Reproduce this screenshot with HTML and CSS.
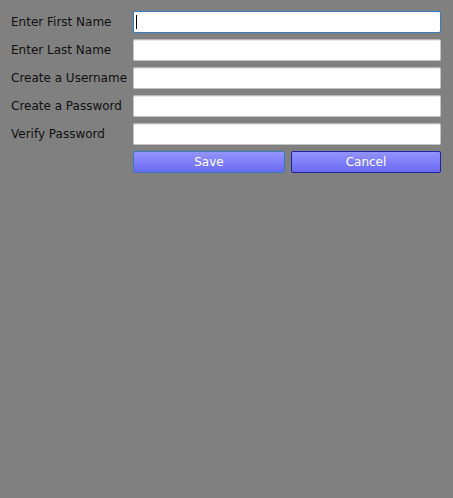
FILE: index.html
```html
<!DOCTYPE html>
<html>
<head>
<meta charset="utf-8">
<link rel="stylesheet" href="styles.css">
</head>
<body>
<form class="form">
  <label class="label" for="first">Enter First Name</label>
  <div class="caret-wrap"><input class="field focused" id="first" type="text"></div>
  <label class="label" for="last">Enter Last Name</label>
  <input class="field" id="last" type="text">
  <label class="label" for="user">Create a Username</label>
  <input class="field" id="user" type="text">
  <label class="label" for="pass">Create a Password</label>
  <input class="field" id="pass" type="password">
  <label class="label" for="verify">Verify Password</label>
  <input class="field" id="verify" type="password">
  <div class="spacer"></div>
  <div class="buttons">
    <button class="btn save" type="button">Save</button>
    <button class="btn cancel" type="button">Cancel</button>
  </div>
</form>
</body>
</html>
```
FILE: styles.css
```css
html, body {
  margin: 0;
  padding: 0;
  background: #808080;
  height: 100%;
}
body {
  font-family: "DejaVu Sans", Verdana, sans-serif;
  font-size: 12px;
  color: #111111;
}
.form {
  display: grid;
  grid-template-columns: 116px 308px;
  grid-auto-rows: 22px;
  column-gap: 6px;
  row-gap: 6px;
  padding: 11px 0 0 11px;
  margin: 0;
}
.label {
  display: flex;
  align-items: center;
  white-space: nowrap;
}
.caret-wrap {
  position: relative;
  width: 308px;
  height: 22px;
}
.caret-wrap::after {
  content: "";
  position: absolute;
  left: 3px;
  top: 4px;
  width: 1px;
  height: 14px;
  background: #000000;
}
.field {
  box-sizing: border-box;
  display: block;
  width: 308px;
  height: 22px;
  margin: 0;
  padding: 0 3px;
  font-family: "DejaVu Sans", Verdana, sans-serif;
  font-size: 12px;
  background: #ffffff;
  border: 1px solid #c4c4c4;
  border-top-color: #b8b8b8;
  border-radius: 2px;
  outline: none;
  box-shadow: inset 0 1px 0 #e8e8e8;
}
.field.focused {
  border-color: #3a7bb8;
  box-shadow: none;
}
.field:focus {
  border-color: #3a7bb8;
  box-shadow: none;
  outline: none;
}
.buttons {
  display: flex;
  gap: 6px;
  width: 308px;
}
.btn {
  box-sizing: border-box;
  height: 22px;
  margin: 0;
  padding: 0;
  font-family: "DejaVu Sans", Verdana, sans-serif;
  font-size: 12px;
  color: #ffffff;
  background: linear-gradient(#9393ff, #6a6af2);
  border-radius: 2px;
  cursor: pointer;
}
.save {
  flex: 152 0 0;
  border: 1px solid #3b7cb6;
}
.cancel {
  flex: 150 0 0;
  border: 1px solid #2323a6;
}
```
